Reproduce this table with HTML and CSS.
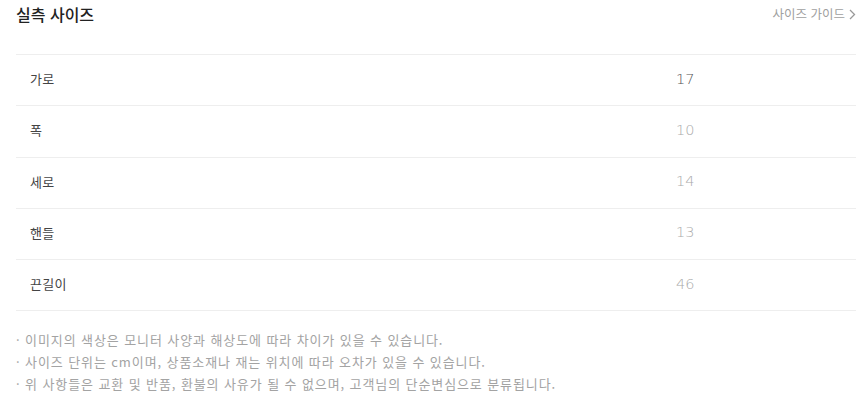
FILE: index.html
```html
<!DOCTYPE html>
<html lang="ko">
<head>
<meta charset="utf-8">
<link rel="stylesheet" href="styles.css">
</head>
<body>
<div class="wrap">
  <div class="head">
    <h2 class="title">실측 사이즈</h2>
    <a class="guide">사이즈 가이드<svg class="chev" width="7" height="11" viewBox="0 0 7 11"><path d="M1 1l4.5 4.5L1 10" fill="none" stroke="#999" stroke-width="1.3"/></svg></a>
  </div>
  <div class="table">
    <div class="row"><span class="label">가로</span><span class="val dark">17</span></div>
    <div class="row"><span class="label">폭</span><span class="val">10</span></div>
    <div class="row"><span class="label">세로</span><span class="val">14</span></div>
    <div class="row"><span class="label">핸들</span><span class="val">13</span></div>
    <div class="row"><span class="label">끈길이</span><span class="val">46</span></div>
  </div>
  <ul class="notes">
    <li>· 이미지의 색상은 모니터 사양과 해상도에 따라 차이가 있을 수 있습니다.</li>
    <li>· 사이즈 단위는 cm이며, 상품소재나 재는 위치에 따라 오차가 있을 수 있습니다.</li>
    <li>· 위 사항들은 교환 및 반품, 환불의 사유가 될 수 없으며, 고객님의 단순변심으로 분류됩니다.</li>
  </ul>
</div>
</body>
</html>
```
FILE: styles.css
```css
html, body { margin: 0; padding: 0; background: #fff; }
body { font-family: "Noto Sans CJK KR", "Noto Sans", sans-serif; }
.wrap { padding: 0 4px 0 16px; }
.head { display: flex; justify-content: space-between; align-items: flex-start; height: 54px; }
.title { margin: 0; padding-top: 3px; font-size: 16px; line-height: 22px; font-weight: 500; color: #222; letter-spacing: 0; }
.guide { display: flex; align-items: center; gap: 4px; padding-top: 5px; font-size: 12.5px; line-height: 18px; color: #a0a0a0; text-decoration: none; letter-spacing: 0; }
.chev { margin-top: 1px; }
.table { border-top: 1px solid #eee; }
.row { display: grid; grid-template-columns: 660px 1fr; align-items: center; height: 50.25px; padding-bottom: 3px; box-sizing: content-box; height: 47.25px; border-bottom: 1px solid #eee; }
.label { padding-left: 14px; font-size: 13px; color: #444; letter-spacing: 0.3px; }
.val { font-family: "DejaVu Sans", sans-serif; font-weight: 200; font-size: 14.5px; color: #aaa; }
.val.dark { color: #555; }
.notes { list-style: none; margin: 18px 0 0; padding: 0; }
.notes li { font-size: 13px; line-height: 22px; color: #a3a3a3; letter-spacing: 0.9px; }
```
